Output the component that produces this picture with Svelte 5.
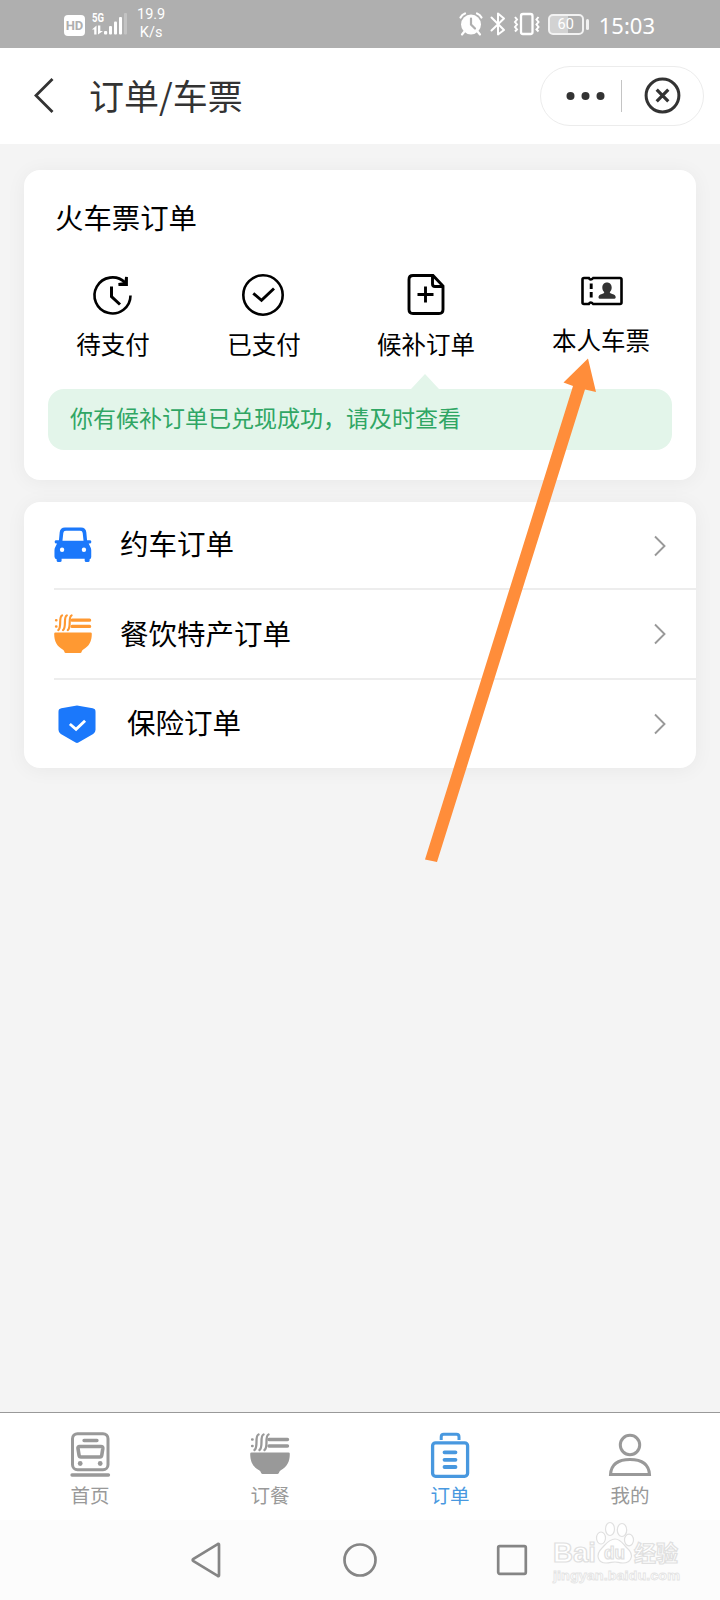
<script lang="ts">
  type Item = { id: string; label: string };

  const tickets: Item[] = [
    { id: 'pending', label: '待支付' },
    { id: 'paid', label: '已支付' },
    { id: 'waitlist', label: '候补订单' },
    { id: 'mine', label: '本人车票' }
  ];

  const services: Item[] = [
    { id: 'car', label: '约车订单' },
    { id: 'food', label: '餐饮特产订单' },
    { id: 'insurance', label: '保险订单' }
  ];

  const tabs: Item[] = [
    { id: 'home', label: '首页' },
    { id: 'meal', label: '订餐' },
    { id: 'orders', label: '订单' },
    { id: 'me', label: '我的' }
  ];

  let active = $state('orders');
</script>

{#snippet bowl()}
  <g fill="none" stroke="currentColor" stroke-width="3.400" stroke-linecap="round">
    <path d="M19 5.500h18.500M19 12h18.500" />
    <path d="M2.200 5.500h.3M2.200 12h.3" stroke-width="2.600" />
    <path d="M8.500.5C4.500 2 8.500 13 4.500 16M13.500.5C9.500 2 13.500 13 9.500 16M18.500.5C14.500 2 18.500 13 14.500 16" stroke-width="2.300" />
  </g>
  <path d="M1.500 18.500h37q1.300 0 1.300 1.300C39.800 28 37 33 30.500 36.500q-1 .6-1.300 1.800-.4 1.700-1.700 1.700h-15q-1.300 0-1.700-1.700-.3-1.200-1.300-1.800C3 33 .2 28 .2 19.800q0-1.300 1.300-1.300z" fill="currentColor" />
{/snippet}

<div class="screen">
  <div class="status">
    <div class="status-left">
      <span class="hd">HD</span>
      <svg class="signal" width="36" height="24" viewBox="0 0 36 24" fill="#fff">
        <text x="0" y="10" font-size="12" font-weight="700" textLength="12" lengthAdjust="spacingAndGlyphs">5G</text>
        <path d="M0 17.500L4.500 13.500v9H2.200v-5zM6 13.500h2.300v5.500H11l-5 3.500z" />
        <rect x="12" y="19" width="3.200" height="3.500" rx="1" />
        <rect x="17" y="14" width="3" height="8.500" rx="1" />
        <rect x="22" y="9.500" width="3" height="13" rx="1" />
        <rect x="27" y="5" width="3" height="17.500" rx="1" />
        <rect x="32" y="1" width="3" height="21.500" rx="1" opacity=".25" />
      </svg>
      <span class="speed">19.9<br />K/s</span>
    </div>
    <div class="status-right">
      <svg width="24" height="24" viewBox="0 0 24 24">
        <path d="M1.500 5.500Q3 2.500 6 1.500M18 1.500Q21 2.500 22.500 5.500M5 20l-2 2.500M19 20l2 2.500" fill="none" stroke="#fff" stroke-width="2.200" stroke-linecap="round" />
        <circle cx="12" cy="12.500" r="10" fill="#fff" />
        <path d="M12 6.500v6l4 4" fill="none" stroke="#afafaf" stroke-width="2.200" stroke-linecap="round" />
      </svg>
      <svg class="bt" width="16" height="24" viewBox="0 0 16 24" fill="none" stroke="#fff" stroke-width="2">
        <path d="M1.500 5.500L14 18l-6 4.500v-21L14 6.500 1.500 18.500" stroke-linejoin="round" stroke-linecap="round" />
      </svg>
      <svg class="vib" width="28" height="24" viewBox="0 0 28 24" fill="none" stroke="#fff">
        <rect x="8" y="2" width="11.500" height="20" rx="2" stroke-width="2.300" />
        <path d="M2 5l2 2.500L2 10l2 2.500L2 15l2 2.500-2 2M25.500 5l-2 2.500 2 2.500-2 2.500 2 2.500-2 2.500 2 2" stroke-width="2" />
      </svg>
      <div class="battery"><span>60</span></div>
      <span class="clock">15:03</span>
    </div>
  </div>

  <header class="head">
    <svg class="back" width="24" height="40" viewBox="0 0 24 40" fill="none" stroke="#333" stroke-width="2.800">
      <path d="M21.500 3L5 19.500 21.500 36" />
    </svg>
    <h1>订单/车票</h1>
    <div class="capsule">
      <svg class="dots" width="40" height="10" viewBox="0 0 40 10" fill="#333">
        <circle cx="4.500" cy="5" r="4" /><circle cx="19.500" cy="5" r="4" /><circle cx="34.500" cy="5" r="4" />
      </svg>
      <i></i>
      <svg width="38" height="38" viewBox="0 0 38 38" fill="none" stroke="#333">
        <circle cx="19.500" cy="18.500" r="16.400" stroke-width="3" />
        <path d="M13.700 12.700l11.600 11.600M25.300 12.700L13.700 24.300" stroke-width="3.200" />
      </svg>
    </div>
  </header>

  <main>
    <section class="card train">
      <h2>火车票订单</h2>
      <div class="tickets">
        {#each tickets as t (t.id)}
          <div class="ticket {t.id}">
            <svg width="44" height="44" viewBox="0 0 44 44" fill="none" stroke="#000" stroke-width="2.600">
              {#if t.id === 'pending'}
                <path d="M39.500 22.500A18 18 0 1 1 34 9.500" />
                <path d="M35.500 4v7.500h-8l7-1z" stroke-width="2.800" />
                <path d="M20.500 13.500v10l8.500 8" stroke-width="3" />
              {:else if t.id === 'paid'}
                <circle cx="21" cy="22" r="19.700" />
                <path d="M11.300 20.300l8.200 7L32 15.500" stroke-width="2.900" />
              {:else if t.id === 'waitlist'}
                <path d="M29 2.500H9q-4 0-4 4v30q0 4 4 4h26q4 0 4-4V13z" stroke-width="2.900" />
                <path d="M28.500 3v8q0 2.500 2.500 2.500h7.500M21.500 13.500v16M13.500 21.500h16" stroke-width="2.900" />
              {:else}
                <path d="M5 9h4.800q1.700 3 4.400 0H41q1.500 0 1.500 1.500v23q0 1.500-1.500 1.500H14.200q-2.700-3-4.400 0H5q-1.500 0-1.500-1.500v-23Q3.500 9 5 9z" />
                <path d="M12.200 14.500v16" stroke-dasharray="5.500 3" stroke-width="2.900" />
                <path d="M28 13.500c3 0 4.700 2.200 4.700 5 0 2-.8 3.500-2 4.700q.2 1.300 2.500 1.800c2.500.5 3.500 2 3.500 3.200 0 1-1 1.500-2.200 1.500H21.700c-1.400 0-2.200-.5-2.200-1.500 0-1.200 1-2.700 3.500-3.200q2.300-.5 2.300-1.800c-1.200-1.200-2-2.700-2-4.700 0-2.800 1.700-5 4.700-5z" fill="#333" stroke="none" />
              {/if}
            </svg>
            <span>{t.label}</span>
          </div>
        {/each}
      </div>
      <p class="notice">你有候补订单已兑现成功，请及时查看</p>
    </section>

    <section class="card list">
      {#each services as s (s.id)}
        <div class="row {s.id}">
          <svg class="row-icon" width="38" height="38" viewBox="0 0 40 40">
            {#if s.id === 'car'}
              <path d="M11.500 1.500h17q5 0 5.500 5l.8 8.500H38q1.300 0 1.300 1.700T38 18.500h-1.500l1.800 3.500q.9 1.500.9 3.500v7q0 2-1.700 2.500v1.500q0 1.500-1.700 1.500H34q-1.700 0-1.700-1.500v-2H8v2Q8 38 6.300 38H4.500q-1.700 0-1.700-1.500V35Q.5 34.500.5 32v-6.500q0-2 .9-3.500l1.800-3.500H2q-1.300 0-1.300-1.800T2 15h3.200L6 6.500q.5-5 5.500-5z" fill="currentColor" />
              <path d="M12.500 5h15q2.500 0 2.700 2.300l.9 8.200H8.900l.9-8.200Q10 5 12.500 5z" fill="#fff" />
              <circle cx="8.500" cy="25" r="2.300" fill="#fff" /><circle cx="31.500" cy="25" r="2.300" fill="#fff" />
            {:else if s.id === 'food'}
              {@render bowl()}
            {:else}
              <path d="M18.500.8q1.500-.5 3 0l15 2.700Q39.500 4 39.500 7v19q0 3-2.500 4.500l-15.500 9q-1.500.8-3 0L3 30.500Q.5 29 .5 26V7q0-3 3-3.500z" fill="currentColor" />
              <path d="M12.500 20l6.500 5.500 9.500-9" fill="none" stroke="#fff" stroke-width="3" />
            {/if}
          </svg>
          <span class="name">{s.label}</span>
          <svg class="chev" width="12" height="22" viewBox="0 0 12 22" fill="none" stroke="#999" stroke-width="1.900">
            <path d="M1 1.500L10.500 11 1 20.500" />
          </svg>
        </div>
      {/each}
    </section>
  </main>

  <nav class="tabs">
    {#each tabs as t (t.id)}
      <button class="tab" class:active={active === t.id} onclick={() => (active = t.id)}>
        {#if t.id === 'meal'}
          <svg width="40" height="46" viewBox="0 -2 40 46">{@render bowl()}</svg>
        {:else}
          <svg width="44" height="46" viewBox="0 0 44 46" fill="none" stroke="currentColor" stroke-width="3">
            {#if t.id === 'home'}
              <rect x="4.500" y="1.700" width="35.500" height="36" rx="5" />
              <path d="M16 8.500h13M4 43h36.500" stroke-linecap="round" stroke-width="3.300" />
              <path d="M11.500 14.500h21.500q2 0 1.800 2l-1 6.500q-.3 2-2 2H13q-1.700 0-2-2l-1-6.500q-.3-2 1.500-2z" stroke-width="3.600" />
              <circle cx="12.200" cy="31.500" r="2.400" fill="currentColor" stroke="none" /><circle cx="32.200" cy="31.500" r="2.400" fill="currentColor" stroke="none" />
            {:else if t.id === 'orders'}
              <rect x="4.600" y="10.800" width="35" height="33.500" rx="3" stroke-width="3.300" />
              <path d="M13.200 8V5q0-2.700 2.500-2.700h12.800q2.500 0 2.500 2.700v3" />
              <path d="M16.500 20.300h11M16.500 27.800h11M16.500 35h11" stroke-linecap="round" stroke-width="3.800" />
            {:else}
              <circle cx="22" cy="13" r="9.700" />
              <path d="M2.500 42.500Q3.500 27.500 22 27.500t19.500 15z" />
            {/if}
          </svg>
        {/if}
        <span>{t.label}</span>
      </button>
    {/each}
  </nav>

  <footer class="sysnav">
    <svg width="34" height="40" viewBox="0 0 34 40"><path d="M28 4.800v30.400q0 1.300-1.300.7L2.500 21.200q-1.700-1.200 0-2.400L26.700 4.100q1.300-.6 1.300.7z" /></svg>
    <svg width="40" height="40" viewBox="0 0 40 40"><circle cx="20" cy="20" r="15.500" /></svg>
    <svg width="34" height="40" viewBox="0 0 34 40"><rect x="3.200" y="6.200" width="27.600" height="27.600" rx="1.500" /></svg>
    <svg class="mark" width="140" height="66" viewBox="0 0 140 66">
      <g class="outline">
        <text x="3" y="41.500" font-size="27" font-weight="700" textLength="43" lengthAdjust="spacingAndGlyphs">Bai</text>
        <ellipse cx="51" cy="18" rx="4.500" ry="6" /><ellipse cx="60" cy="9" rx="4.500" ry="6.500" />
        <ellipse cx="72" cy="10" rx="4.700" ry="6.500" /><ellipse cx="79" cy="20" rx="4.500" ry="5.800" />
        <path d="M65 19c6 0 8 5 12 9 8 7 4 15-4 15-4 0-5-1-8-1s-5 1-9 1c-8 0-11-8-4-15 4-4 7-9 13-9z" />
        <text x="54" y="39" font-size="18" font-weight="700" textLength="21" lengthAdjust="spacingAndGlyphs">du</text>
        <text x="84" y="41" font-size="22" font-weight="700">经验</text>
      </g>
      <text class="url" x="3" y="60" font-size="13.500" font-weight="700" textLength="127" lengthAdjust="spacingAndGlyphs">jingyan.baidu.com</text>
    </svg>
  </footer>

  <svg class="pointer" width="180" height="510" viewBox="0 0 180 510">
    <path d="M168 8.500L143.500 32.500l9.500 3.500L5 509.500l12 2.500L165 39.500 176 42z" fill="#ff8d3a" />
  </svg>
</div>

<style>
  :global(body) { background: #f4f4f4; }
  .screen { position: relative; width: 720px; height: 1600px; display: flex; flex-direction: column; overflow: hidden; background: #f4f4f4; color: #000; font-family: KaiTi, "Noto Sans CJK SC", sans-serif; }
  svg { display: block; flex: none; overflow: visible; }
  h1, h2, p { margin: 0; font-weight: 400; }

  .status { height: 48px; flex: none; display: flex; justify-content: space-between; padding: 0 65px 0 64px; background: #afafaf; color: #fff; font-family: Roboto, sans-serif; }
  .status-left, .status-right { display: flex; align-items: center; }
  .hd { width: 21px; height: 21px; margin-top: 2px; border-radius: 4px; background: #fff; color: #afafaf; font-size: 13px; font-weight: 700; line-height: 22px; text-align: center; }
  .signal { margin-left: 7px; }
  .speed { margin-left: 9px; font-size: 14.500px; line-height: 18px; text-align: center; }
  .bt { margin-left: 7px; }
  .vib { margin-left: 7px; }
  .battery { position: relative; box-sizing: border-box; width: 36px; height: 21px; margin: 1px 0 0 7px; border: 2px solid #f2f2f2; border-radius: 5px; background: linear-gradient(90deg, #d2d2d2 55%, #afafaf 55%); font-size: 14.500px; line-height: 18px; text-align: center; }
  .battery::after { content: ''; position: absolute; right: -7px; top: 3px; width: 3px; height: 11px; border-radius: 2px; background: #f2f2f2; }
  .clock { margin: 1px 0 0 15px; font-family: "Noto Sans", sans-serif; font-size: 22px; line-height: 30px; }

  .head { box-sizing: border-box; height: 96px; flex: none; display: flex; align-items: center; padding: 0 16px 0 31px; background: #fff; }
  h1 { margin: -3px 0 0 34px; font-size: 35px; line-height: 50px; color: #333; }
  .capsule { box-sizing: border-box; width: 164px; height: 60px; margin-left: auto; padding: 0 22px 0 25px; display: flex; align-items: center; justify-content: space-between; border: 1px solid #ececec; border-radius: 30px; }
  .capsule i { width: 1px; height: 32px; margin: 0 7px 0 0; background: #c4c4c4; }

  main { flex: 1; padding: 26px 24px; display: flex; flex-direction: column; gap: 22px; }
  .card { box-sizing: border-box; border-radius: 16px; background: #fff; box-shadow: 0 2px 20px rgba(0, 0, 0, .05); }
  .train { height: 310px; padding: 27px 24px 30px; }
  h2 { padding-left: 7px; font-size: 28.400px; line-height: 40px; }
  .tickets { height: 152px; box-sizing: border-box; display: grid; grid-template-columns: 130px 172px 152px 198px; margin: 0 -16px 0 0; padding-top: 36px; }
  .ticket { display: flex; flex-direction: column; align-items: center; gap: 9px; font-size: 24.500px; line-height: 36px; }
  .mine { margin-top: -4px; }
  .notice { position: relative; height: 61px; box-sizing: border-box; padding: 9px 22px; border-radius: 16px; background: #e3f5ea; color: #30a664; font-size: 23px; line-height: 38px; white-space: nowrap; }
  .notice::before { content: ''; position: absolute; left: 363px; top: -15px; border: 14px solid transparent; border-top: 0; border-bottom: 15px solid #e3f5ea; }

  .list { height: 266px; padding-left: 30px; }
  .row { box-sizing: border-box; height: 88px; display: flex; align-items: center; padding-right: 30px; border-bottom: 2px solid #ededed; }
  .row:last-child { border: 0; }
  .row.food { height: 90px; }
  .name { margin: -5px auto 0 28px; font-size: 28.500px; line-height: 40px; }
  .car .chev { margin-top: 2px; }
  .car .row-icon { color: #1b78fb; }
  .food .row-icon { color: #ff9932; }
  .food .name { margin-top: -3px; }
  .insurance .row-icon { margin: -1px 0 0 4px; color: #1b78fb; }
  .insurance .name { margin-left: 31px; }

  .tabs { height: 107px; flex: none; display: grid; grid-template-columns: repeat(4, 1fr); border-top: 1px solid #999; background: #fff; }
  .tab { display: flex; flex-direction: column; align-items: center; gap: 3px; padding: 19px 0 0; border: 0; background: none; color: #999; font: inherit; font-size: 19.500px; line-height: 28px; }
  .active { color: #4898df; }

  .sysnav { position: relative; height: 80px; flex: none; display: flex; align-items: center; justify-content: center; gap: 115px; background: #fcfcfc; fill: none; stroke: #858585; stroke-width: 2.700; }
  .mark { position: absolute; left: 550px; top: 0; font-family: "Liberation Sans", "Noto Sans CJK SC", sans-serif; }
  .outline { fill: #fff; stroke: #e0e0e0; stroke-width: 1.200; }
  .url { fill: #fff; stroke: #e4e4e4; stroke-width: .800; }
  .pointer { position: absolute; left: 420px; top: 350px; pointer-events: none; }
</style>
